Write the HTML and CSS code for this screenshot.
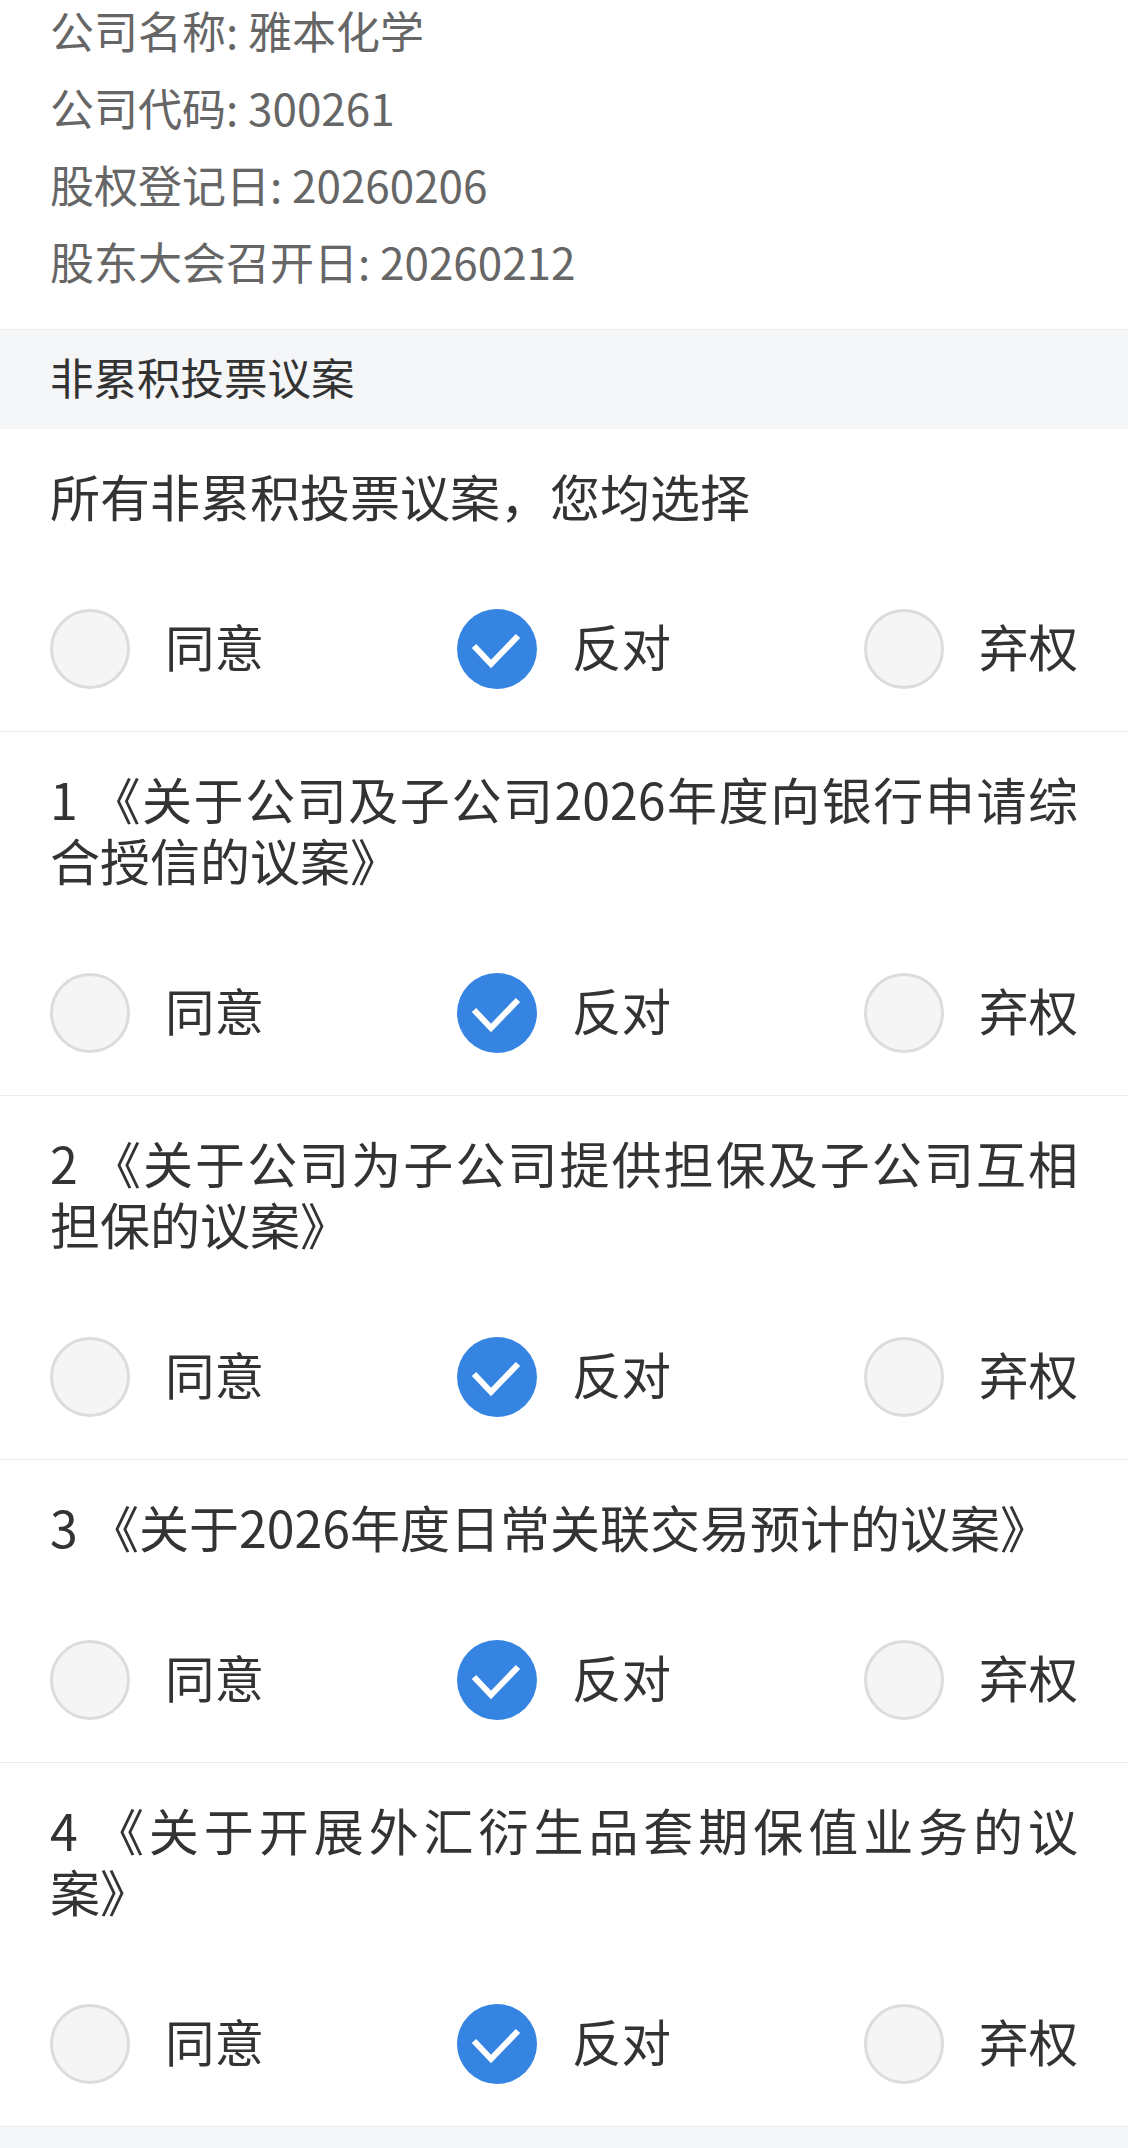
FILE: index.html
```html
<!DOCTYPE html>
<html lang="zh-CN">
<head>
<meta charset="utf-8">
<title>非累积投票议案</title>
<link rel="stylesheet" href="styles.css">
</head>
<body>
<div class="page">
  <div class="info">
    <p class="info-line">公司名称: 雅本化学</p>
    <p class="info-line">公司代码: 300261</p>
    <p class="info-line">股权登记日: 20260206</p>
    <p class="info-line">股东大会召开日: 20260212</p>
  </div>

  <div class="section-head">非累积投票议案</div>

  <div class="motion">
    <div class="motion-title">所有非累积投票议案，您均选择</div>
    <div class="options">
      <div class="option"><span class="radio"></span><span class="label">同意</span></div>
      <div class="option checked"><span class="radio"><svg viewBox="0 0 80 80" class="tick"><polyline points="17,37 34,55 61,27"/></svg></span><span class="label">反对</span></div>
      <div class="option"><span class="radio"></span><span class="label">弃权</span></div>
    </div>
  </div>

  <div class="motion">
    <div class="motion-title">1 《关于公司及子公司2026年度向银行申请综合授信的议案》</div>
    <div class="options">
      <div class="option"><span class="radio"></span><span class="label">同意</span></div>
      <div class="option checked"><span class="radio"><svg viewBox="0 0 80 80" class="tick"><polyline points="17,37 34,55 61,27"/></svg></span><span class="label">反对</span></div>
      <div class="option"><span class="radio"></span><span class="label">弃权</span></div>
    </div>
  </div>

  <div class="motion">
    <div class="motion-title">2 《关于公司为子公司提供担保及子公司互相担保的议案》</div>
    <div class="options">
      <div class="option"><span class="radio"></span><span class="label">同意</span></div>
      <div class="option checked"><span class="radio"><svg viewBox="0 0 80 80" class="tick"><polyline points="17,37 34,55 61,27"/></svg></span><span class="label">反对</span></div>
      <div class="option"><span class="radio"></span><span class="label">弃权</span></div>
    </div>
  </div>

  <div class="motion">
    <div class="motion-title">3 《关于2026年度日常关联交易预计的议案》</div>
    <div class="options">
      <div class="option"><span class="radio"></span><span class="label">同意</span></div>
      <div class="option checked"><span class="radio"><svg viewBox="0 0 80 80" class="tick"><polyline points="17,37 34,55 61,27"/></svg></span><span class="label">反对</span></div>
      <div class="option"><span class="radio"></span><span class="label">弃权</span></div>
    </div>
  </div>

  <div class="motion">
    <div class="motion-title">4 《关于开展外汇衍生品套期保值业务的议案》</div>
    <div class="options">
      <div class="option"><span class="radio"></span><span class="label">同意</span></div>
      <div class="option checked"><span class="radio"><svg viewBox="0 0 80 80" class="tick"><polyline points="17,37 34,55 61,27"/></svg></span><span class="label">反对</span></div>
      <div class="option"><span class="radio"></span><span class="label">弃权</span></div>
    </div>
  </div>

  <div class="section-foot"></div>
</div>
</body>
</html>
```

FILE: styles.css
```css
html, body {
  margin: 0;
  padding: 0;
  background: #ffffff;
}

body {
  font-family: "Noto Sans CJK SC", "Noto Sans", sans-serif;
  color: #333333;
  overflow: hidden;
  text-spacing-trim: space-all;
}

.page {
  width: 1128px;
}

.info {
  margin-top: -8px;
  padding: 0 50px 29px;
}

.info-line {
  margin: 0;
  font-size: 44px;
  line-height: 77px;
  color: #666666;
}

.section-head {
  border-top: 1px solid #ececec;
  background: #f5f6f8;
  height: 93px;
  padding: 0 50px 6px;
  font-size: 43.5px;
  line-height: 93px;
  color: #333333;
}

.motion {
  padding: 36px 50px 42px;
  border-bottom: 1px solid #ececec;
  display: flex;
  flex-direction: column;
  gap: 83px;
}

.motion-title {
  font-size: 50px;
  line-height: 61px;
  text-align: justify;
  text-spacing-trim: space-all;
  color: #333333;
}

.options {
  display: flex;
  justify-content: space-between;
  align-items: center;
  height: 80px;
}

.option {
  display: flex;
  align-items: center;
  gap: 35px;
}

.radio {
  box-sizing: border-box;
  width: 80px;
  height: 80px;
  border-radius: 50%;
  border: 3px solid #dcdcdc;
  background: #f5f5f5;
  display: flex;
  align-items: center;
  justify-content: center;
}

.option.checked .radio {
  border: none;
  background: #3584e2;
}

.tick {
  width: 80px;
  height: 80px;
  display: block;
}

.tick polyline {
  fill: none;
  stroke: #ffffff;
  stroke-width: 6;
  stroke-linecap: butt;
  stroke-linejoin: miter;
}

.label {
  font-size: 49.5px;
  line-height: 61px;
  padding-bottom: 8px;
  color: #333333;
}

.section-foot {
  background: #f5f6f8;
  height: 60px;
}
```
